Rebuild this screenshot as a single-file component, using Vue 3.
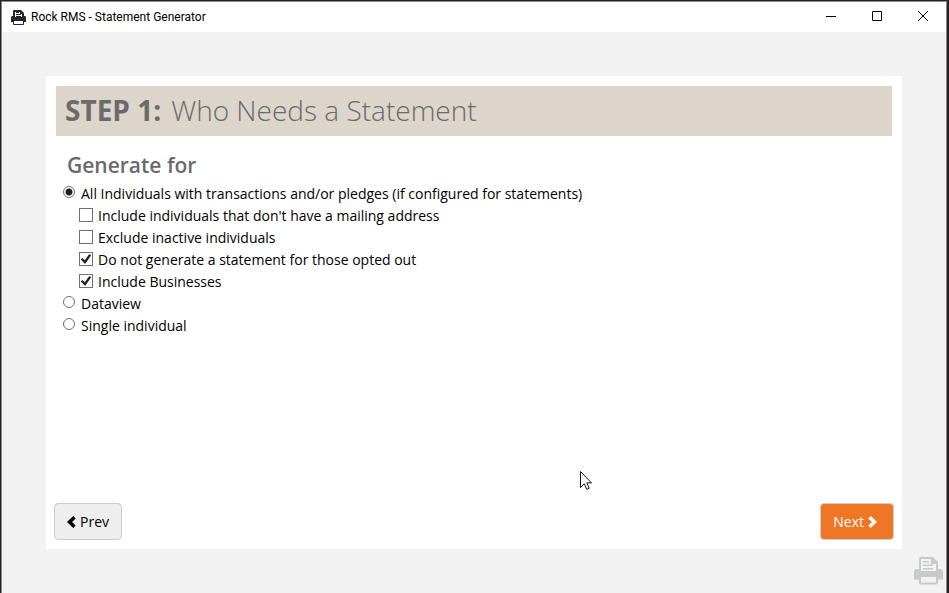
<script setup>
import { ref } from 'vue'

const mode = ref('all')
const modes = [
  { value: 'dataview', label: 'Dataview' },
  { value: 'single', label: 'Single individual' },
]
const options = ref([
  { id: 'no-address', label: "Include individuals that don't have a mailing address", on: false },
  { id: 'inactive', label: 'Exclude inactive individuals', on: false },
  { id: 'opted-out', label: 'Do not generate a statement for those opted out', on: true },
  { id: 'businesses', label: 'Include Businesses', on: true },
])
</script>

<template>
  <div class="window">
    <header class="titlebar">
      <svg class="app-icon" viewBox="0 0 15 15" aria-hidden="true">
        <path class="ink" fill-rule="evenodd" d="M3 0H10L13 3V6H14Q15 6 15 8V12H13V14Q13 15 12 15H3Q2 15 2 14V12H0V8Q0 6 1 6H2V1Q2 0 3 0ZM4 2V7H11V4H9V2ZM3 11V14H12V11Z" />
        <path class="ink" d="M5 2H8V3H5ZM5 4H10V5H5ZM5 6H10V7H5Z" />
      </svg>
      <span class="app-title">Rock RMS - Statement Generator</span>
      <div class="controls">
        <button type="button" aria-label="Minimize"><svg viewBox="0 0 10 10"><path d="M0 5.500H10" /></svg></button>
        <button type="button" aria-label="Maximize"><svg viewBox="0 0 10 10"><path d="M.5 .5H9.500V9.500H.5Z" /></svg></button>
        <button type="button" aria-label="Close"><svg viewBox="0 0 10 10"><path d="M0 0L10 10M10 0L0 10" /></svg></button>
      </div>
    </header>

    <main class="workspace">
      <section class="panel">
        <h1 class="step"><strong>STEP 1:</strong><span>Who Needs a Statement</span></h1>
        <form class="choices" @submit.prevent>
          <h2>Generate for</h2>
          <label class="row" for="mode-all">
            <input id="mode-all" v-model="mode" type="radio" name="mode" value="all">
            <span>All Individuals with transactions and/or pledges (if configured for statements)</span>
          </label>
          <label v-for="o in options" :key="o.id" class="row sub" :for="o.id">
            <input :id="o.id" v-model="o.on" type="checkbox">
            <span>{{ o.label }}</span>
          </label>
          <label v-for="m in modes" :key="m.value" class="row" :for="'mode-' + m.value">
            <input :id="'mode-' + m.value" v-model="mode" type="radio" name="mode" :value="m.value">
            <span>{{ m.label }}</span>
          </label>
        </form>
        <footer class="actions">
          <button type="button" class="btn">
            <svg viewBox="0 0 9 12" aria-hidden="true"><path d="M7.500 1.200L2.500 6L7.500 10.800" /></svg>
            Prev
          </button>
          <button type="button" class="btn primary">
            Next
            <svg viewBox="0 0 9 12" aria-hidden="true"><path d="M1.500 1.200L6.500 6L1.500 10.800" /></svg>
          </button>
        </footer>
      </section>
    </main>

    <svg class="watermark" viewBox="0 0 29 28" aria-hidden="true">
      <path class="ink" fill-rule="evenodd" d="M7 0H19L24 5V12H26Q29 12 29 15V22.500H24V25.500Q24 27.500 22 27.500H7Q5 27.500 5 25.500V22.500H0V15Q0 12 3 12H5V2Q5 0 7 0ZM7 2V14H22V7H17V2ZM7 20V25.500H22V20Z" />
      <path class="ink" d="M9 4H15V5.500H9ZM9 7.500H19V9H9ZM9 11H19V12.500H9Z" />
    </svg>
    <svg class="pointer" viewBox="0 0 12 19" aria-hidden="true">
      <path d="M.5 .5V16.500L4.300 12.800L6.800 18.400L9.200 17.300L6.800 11.900H11.500Z" />
    </svg>
  </div>
</template>

<style>
body {
  margin: 0;
}
</style>

<style scoped>
.window {
  position: relative;
  box-sizing: border-box;
  min-height: 100vh;
  display: flex;
  flex-direction: column;
  background: #f2f2f2;
  border: solid #262223;
  border-width: 1px 2px 0 1px;
  box-shadow: inset 1px 1px #8a8889, inset -1px 0 #8a8889;
  padding: 1px 1px 0;
  font-family: "Open Sans", "Noto Sans", sans-serif;
  font-size: 14px;
  color: #000;
}
.titlebar {
  display: flex;
  align-items: center;
  height: 30px;
  padding-left: 9px;
  background: #fff;
}
.app-icon {
  width: 15px;
  height: 15px;
  fill: #262626;
}
.app-title {
  flex: 1;
  margin-left: 5px;
  font-family: Roboto, "Open Sans", sans-serif;
  font-size: 12px;
  line-height: 16px;
}
.controls {
  display: flex;
  align-self: stretch;
}
.controls button {
  width: 46px;
  padding: 0 0 2px;
  border: 0;
  background: none;
  display: flex;
  align-items: center;
  justify-content: center;
}
.controls svg {
  width: 10px;
  height: 10px;
  fill: none;
  stroke: #000;
}
.workspace {
  flex: 1;
  display: flex;
  padding: 44px;
}
.panel {
  flex: 1;
  display: flex;
  flex-direction: column;
  padding: 10px 8px 9px;
  background: #fff;
}
.step {
  display: flex;
  gap: 10px;
  margin: 0 2px;
  padding: 0 9px 2px;
  background: #dcd5cb;
  color: #6a6a6a;
  font-size: 28px;
  line-height: 48px;
  font-weight: 300;
}
.step strong {
  font-weight: 700;
}
.choices {
  flex: 1;
  padding: 14px 9px 0;
}
h2 {
  margin: 0 4px 3px;
  color: #6a6a6a;
  font-size: 21px;
  line-height: 30px;
  font-weight: 600;
}
.row {
  display: flex;
  align-items: flex-start;
  gap: 6px;
  line-height: 22px;
}
.sub {
  padding-left: 16px;
  gap: 5px;
}
.row input {
  appearance: none;
  flex: none;
  box-sizing: border-box;
  width: 12px;
  height: 12px;
  margin: 3px 0 0;
  border: 1px solid #707070;
  border-radius: 50%;
  background: #fff;
}
.row input[type="radio"]:checked {
  background: radial-gradient(circle, #212121 3px, #fff 4px);
}
.row input[type="checkbox"] {
  width: 14px;
  height: 14px;
  border-radius: 0;
}
.row input[type="checkbox"]:checked::before {
  content: "";
  display: block;
  width: 12px;
  height: 12px;
  background: #212121;
  clip-path: polygon(6% 52%, 20% 42%, 40% 60%, 76% 10%, 94% 16%, 46% 88%, 38% 88%);
}
.actions {
  display: flex;
  justify-content: space-between;
  align-items: center;
}
.btn {
  display: flex;
  align-items: center;
  gap: 4px;
  padding: 7px 12px;
  border: 1px solid #ccc;
  border-radius: 4px;
  background: #eee;
  color: #000;
  font: inherit;
  line-height: 21px;
}
.btn svg {
  width: 9px;
  height: 12px;
  overflow: visible;
  fill: none;
  stroke: currentColor;
  stroke-width: 3.5;
}
.primary {
  padding: 7px 16px 7px 12px;
  background: #ee7624;
  color: #fff;
}
.watermark {
  position: absolute;
  right: 4px;
  bottom: 8px;
  width: 29px;
  height: 28px;
  fill: #c8c9c9;
}
.pointer {
  position: absolute;
  left: 579px;
  top: 470px;
  width: 12px;
  height: 19px;
  fill: #fff;
  stroke: #101020;
}
</style>
